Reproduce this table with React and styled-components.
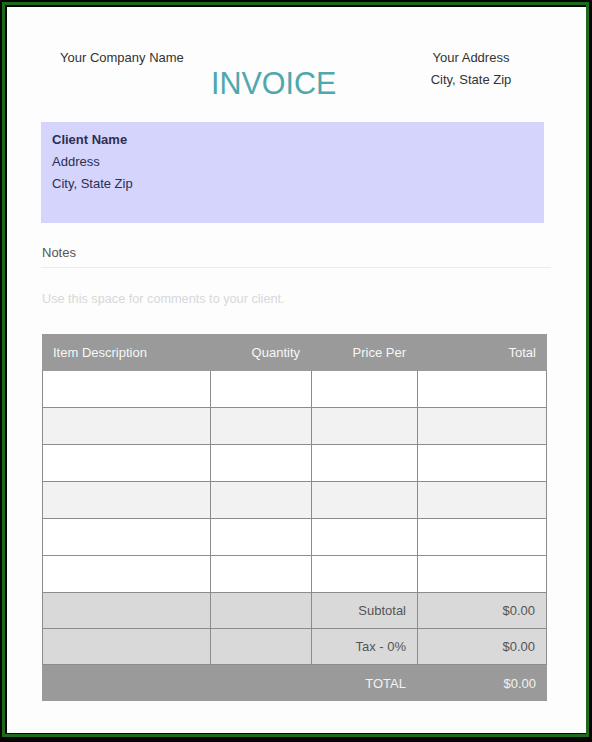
import React from "react";
import styled, { createGlobalStyle } from "styled-components";

const GlobalStyle = createGlobalStyle`
  body {
    margin: 0;
    background-color: #050505;
    font-family: "Liberation Sans", Arial, sans-serif;
  }
`;

const Frame = styled.div`
  width: 592px;
  height: 742px;
  box-sizing: border-box;
  padding: 2px 3px 5px 2px;
  background-color: #050505;
`;

const GreenBorder = styled.div`
  height: 100%;
  box-sizing: border-box;
  border: 3px solid #1d6a1d;
`;

const Sheet = styled.div`
  height: 100%;
  box-sizing: border-box;
  border-style: solid;
  border-color: #050505;
  border-width: 2px 0 1px 2px;
  background-color: #fdfdfd;
  padding: 40px 0 0 34px;
`;

const Header = styled.div`
  display: grid;
  grid-template-columns: 170px 184px 152px;
  align-items: start;
  font-size: 13px;
  line-height: 22px;
  color: #333333;
`;

const CompanyName = styled.div`
  padding-left: 19px;
`;

const InvoiceTitle = styled.div`
  margin-top: 18px;
  font-size: 30.5px;
  line-height: 36px;
  color: #4fa8ae;
`;

const AddressBlock = styled.div`
  text-align: center;
`;

const ClientBox = styled.div`
  width: 503px;
  height: 101px;
  box-sizing: border-box;
  margin-top: 21px;
  padding: 7px 11px;
  background-color: #d4d4fc;
  color: #2e2e52;
  font-size: 13px;
  line-height: 22px;
`;

const ClientName = styled.div`
  font-weight: bold;
`;

const NotesLabel = styled.div`
  width: 509px;
  margin-top: 19px;
  padding: 0 0 3px 1px;
  border-bottom: 1px solid #ececec;
  font-size: 13px;
  line-height: 22px;
  color: #555555;
`;

const Comment = styled.div`
  margin-top: 20px;
  padding-left: 1px;
  font-size: 12.7px;
  line-height: 22px;
  color: #d8d8d8;
`;

const Table = styled.div`
  width: 505px;
  margin-top: 24px;
  margin-left: 1px;
  font-size: 13px;
`;

const tones = {
  head: { bg: "#9a9a9a", color: "#f7f7f7" },
  white: { bg: "#ffffff", color: "#555555" },
  light: { bg: "#f2f2f2", color: "#555555" },
  sum: { bg: "#d9d9d9", color: "#555555" },
  total: { bg: "#9a9a9a", color: "#f2f2f2" },
};

const Row = styled.div`
  display: grid;
  grid-template-columns: 168px 101px 106px 1fr;
  height: ${(p) => p.$h}px;
  box-sizing: border-box;
  background-color: ${(p) => tones[p.$tone].bg};
  color: ${(p) => tones[p.$tone].color};
  border-left: ${(p) => (p.$lined ? "1px solid #8c8c8c" : "none")};
  border-bottom: ${(p) => (p.$lined ? "1px solid #8c8c8c" : "none")};
`;

const Cell = styled.div`
  display: flex;
  align-items: center;
  justify-content: ${(p) => (p.$right ? "flex-end" : "flex-start")};
  padding: 0 ${(p) => (p.$right ? "11px" : "0")} 0 ${(p) => (p.$right ? "0" : "11px")};
  border-right: ${(p) => (p.$lined ? "1px solid #8c8c8c" : "none")};
`;

const itemRows = ["white", "light", "white", "light", "white", "white"];

const App = () => {
  return (
    <>
      <GlobalStyle />
      <Frame>
        <GreenBorder>
          <Sheet>
            <Header>
              <CompanyName>Your Company Name</CompanyName>
              <InvoiceTitle>INVOICE</InvoiceTitle>
              <AddressBlock>
                Your Address
                <br />
                City, State Zip
              </AddressBlock>
            </Header>
            <ClientBox>
              <ClientName>Client Name</ClientName>
              <div>Address</div>
              <div>City, State Zip</div>
            </ClientBox>
            <NotesLabel>Notes</NotesLabel>
            <Comment>Use this space for comments to your client.</Comment>
            <Table>
              <Row $tone="head" $h={37}>
                <Cell>Item Description</Cell>
                <Cell $right>Quantity</Cell>
                <Cell $right>Price Per</Cell>
                <Cell $right>Total</Cell>
              </Row>
              {itemRows.map((tone, i) => (
                <Row key={i} $tone={tone} $h={37} $lined>
                  <Cell $lined />
                  <Cell $lined />
                  <Cell $lined />
                  <Cell $lined />
                </Row>
              ))}
              <Row $tone="sum" $h={36} $lined>
                <Cell $lined />
                <Cell $lined />
                <Cell $lined $right>Subtotal</Cell>
                <Cell $lined $right>$0.00</Cell>
              </Row>
              <Row $tone="sum" $h={36} $lined>
                <Cell $lined />
                <Cell $lined />
                <Cell $lined $right>Tax - 0%</Cell>
                <Cell $lined $right>$0.00</Cell>
              </Row>
              <Row $tone="total" $h={36}>
                <Cell />
                <Cell />
                <Cell $right>TOTAL</Cell>
                <Cell $right>$0.00</Cell>
              </Row>
            </Table>
          </Sheet>
        </GreenBorder>
      </Frame>
    </>
  );
};

export default App;
